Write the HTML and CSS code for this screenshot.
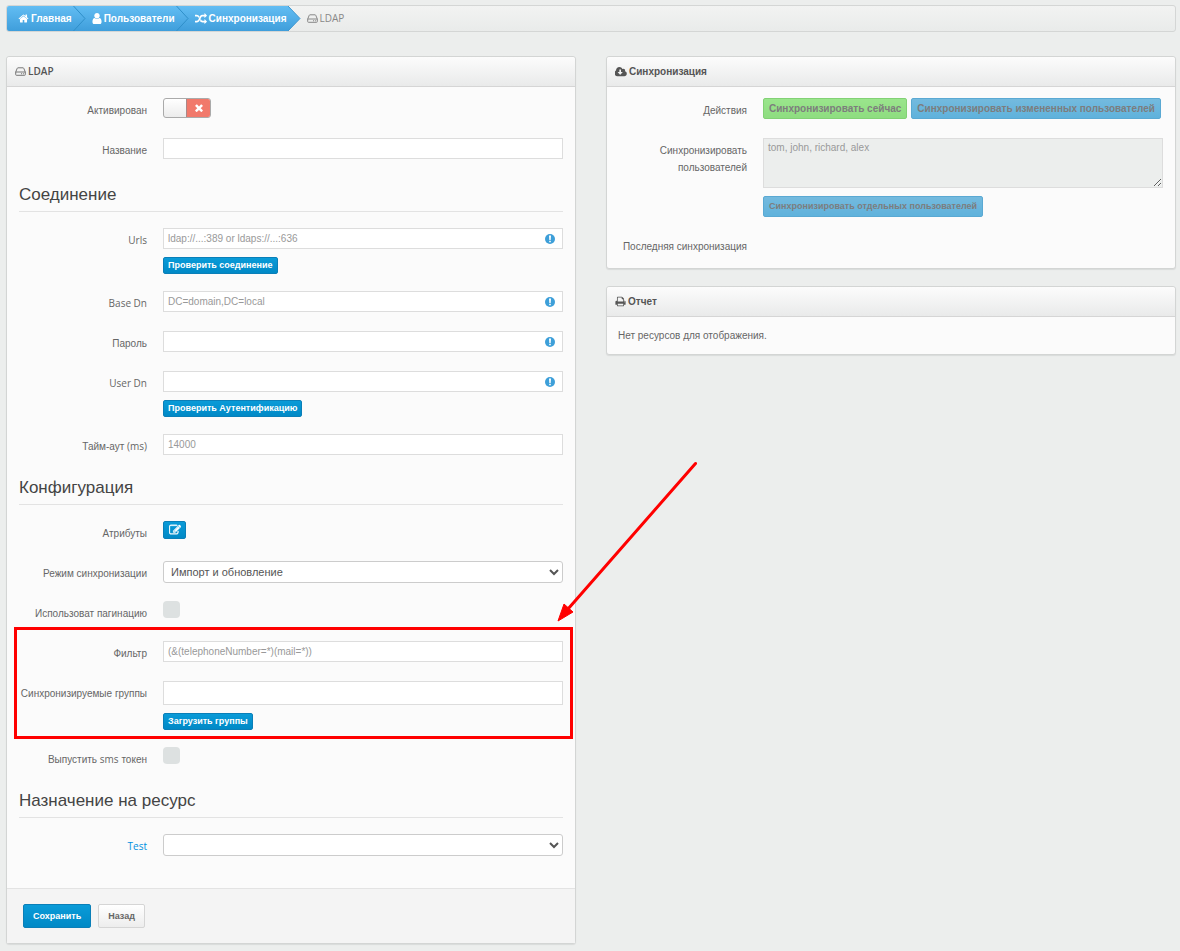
FILE: index.html
```html
<!DOCTYPE html>
<html lang="ru">
<head>
<meta charset="utf-8">
<meta name="viewport" content="width=device-width, initial-scale=1">
<title>LDAP</title>
<link rel="stylesheet" href="styles.css">
</head>
<body>
<svg class="sprite" aria-hidden="true">
  <symbol id="i-home" viewBox="0 0 1792 1792"><path d="M1472 992v480q0 26-19 45t-45 19h-384v-384h-256v384h-384q-26 0-45-19t-19-45v-480q0-1 .5-3t.5-3l575-474 575 474q1 2 1 6zm223-69l-62 74q-8 9-21 11h-3q-13 0-21-7l-692-577-692 577q-12 8-24 7-13-2-21-11l-62-74q-8-10-7-23.5t11-21.5l719-599q32-26 76-26t76 26l244 204v-195q0-14 9-23t23-9h192q14 0 23 9t9 23v408l219 182q10 8 11 21.5t-7 23.5z"/></symbol>
  <symbol id="i-user" viewBox="192 128 1408 1536"><path d="M1536 1399q0 109-62.5 187t-150.5 78h-854q-88 0-150.5-78t-62.5-187q0-85 8.5-160.5t31.5-152 58.5-131 94-89 134.5-34.5q131 128 313 128t313-128q76 0 134.5 34.5t94 89 58.5 131 31.5 152 8.5 160.5zm-256-887q0 159-112.5 271.5t-271.5 112.5-271.5-112.5-112.5-271.5 112.5-271.5 271.5-112.5 271.5 112.5 112.5 271.5z"/></symbol>
  <symbol id="i-random" viewBox="0 0 1792 1792"><path d="M666 481q-60 92-137 273-22-45-37-72.5t-40.5-63.5-51-56.5-63-35-81.5-14.5h-224q-14 0-23-9t-9-23v-192q0-14 9-23t23-9h224q250 0 410 225zm1126 799q0 14-9 23l-320 320q-9 9-23 9-13 0-22.5-9.5t-9.5-22.5v-192q-32 0-85 .5t-81 1-73-1-71-5-64-10.5-63-18.5-58-28.5-59-40-55-53.5-56-69.5q59-93 136-273 22 45 37 72.5t40.5 63.5 51 56.5 63 35 81.5 14.5h256v-192q0-14 9-23t23-9q12 0 24 10l319 319q9 9 9 23zm0-896q0 14-9 23l-320 320q-9 9-23 9-13 0-22.5-9.5t-9.5-22.5v-192h-256q-48 0-87 15t-69 45-51 61.5-45 77.5q-32 62-78 171-29 66-49.5 111t-54 105-64 100-74 83-90 68.5-106.5 42-128 16.5h-224q-14 0-23-9t-9-23v-192q0-14 9-23t23-9h224q48 0 87-15t69-45 51-61.5 45-77.5q32-62 78-171 29-66 49.5-111t54-105 64-100 74-83 90-68.5 106.5-42 128-16.5h256v-192q0-14 9-23t23-9q12 0 24 10l319 319q9 9 9 23z"/></symbol>
  <symbol id="i-hdd" viewBox="0 0 11 11"><path d="M.7 6 2.200 2.400q.2-.6.8-.6h5q.6 0 .8.6L10.300 6v2.600q0 .7-.7.7H1.400q-.7 0-.7-.7zM.7 6h9.600" fill="none" stroke="currentColor"/><path d="M6 7.200h1v1H6zM7.900 7.200h1v1h-1z"/></symbol>
  <symbol id="i-cloud" viewBox="0 0 1856 1792"><path d="M1216 928q0-14-9-23t-23-9h-224v-352q0-13-9.500-22.500t-22.500-9.500h-192q-13 0-22.500 9.500t-9.500 22.500v352h-224q-13 0-22.500 9.500t-9.500 22.500q0 14 9 23l352 352q9 9 23 9t23-9l351-351q10-12 10-24zm640 224q0 159-112.500 271.500t-271.500 112.500h-1088q-185 0-316.500-131.500t-131.500-316.500q0-130 70-240t188-165q-2-30-2-43 0-212 150-362t362-150q156 0 285.500 87t188.500 231q71-62 166-62 106 0 181 75t75 181q0 76-41 138 130 31 213.500 135.500t83.500 238.500z" transform="translate(-32 0)"/></symbol>
  <symbol id="i-print" viewBox="0 0 1792 1792"><path d="M448 1536h896v-256h-896v256zm0-640h896v-384h-160q-40 0-68-28t-28-68v-160h-640v640zm1152 64q0-26-19-45t-45-19-45 19-19 45 19 45 45 19 45-19 19-45zm128 0v416q0 13-9.500 22.500t-22.500 9.500h-224v160q0 40-28 68t-68 28h-960q-40 0-68-28t-28-68v-160h-224q-13 0-22.500-9.500t-9.500-22.500v-416q0-79 56.500-135.500t135.500-56.500h64v-544q0-40 28-68t68-28h672q40 0 88 20t76 48l152 152q28 28 48 76t20 88v256h64q79 0 135.500 56.500t56.500 135.500z"/></symbol>
  <symbol id="i-times" viewBox="302 302 1188 1252"><path d="M1490 1322q0 40-28 68l-136 136q-28 28-68 28t-68-28l-294-294-294 294q-28 28-68 28t-68-28l-136-136q-28-28-28-68t28-68l294-294-294-294q-28-28-28-68t28-68l136-136q28-28 68-28t68 28l294 294 294-294q28-28 68-28t68 28l136 136q28 28 28 68t-28 68l-294 294 294 294q28 28 28 68z"/></symbol>
  <symbol id="i-edit" viewBox="0 0 1792 1792"><path d="M888 1184l116-116-152-152-116 116v56h96v96h56zm440-720q-16-16-33 1l-350 350q-17 17-1 33t33-1l350-350q17-17 1-33zm80 594v190q0 119-84.500 203.500t-203.500 84.500h-832q-119 0-203.500-84.500t-84.500-203.500v-832q0-119 84.500-203.500t203.500-84.500h832q63 0 117 25 15 7 18 23 3 17-9 29l-49 49q-14 14-32 8-23-6-45-6h-832q-66 0-113 47t-47 113v832q0 66 47 113t113 47h832q66 0 113-47t47-113v-126q0-13 9-22l64-64q15-15 35-7t20 29zm-96-738l288 288-672 672h-288v-288zm444 132l-92 92-288-288 92-92q28-28 68-28t68 28l152 152q28 28 28 68t-28 68z" stroke="#fff" stroke-width="60"/></symbol>
  <symbol id="i-info" viewBox="0 0 10 10"><circle cx="5" cy="5" r="5"/><path d="M4 1.600h2L5.700 6H4.300zM4.200 6.800h1.600v1.500H4.200z" fill="#fff"/></symbol>
  <symbol id="i-sep" viewBox="0 0 13 25"><path d="M.5 0 12 12.500 .5 25" fill="none" stroke="#2f8fc9"/></symbol>
</svg>

<nav class="crumbs" aria-label="Навигация">
  <a class="crumb" href="#"><svg class="icon"><use href="#i-home"/></svg>Главная</a>
  <svg class="sep" aria-hidden="true"><use href="#i-sep"/></svg>
  <a class="crumb" href="#"><svg class="icon narrow"><use href="#i-user"/></svg>Пользователи</a>
  <svg class="sep" aria-hidden="true"><use href="#i-sep"/></svg>
  <a class="crumb" href="#"><svg class="icon wide"><use href="#i-random"/></svg>Синхронизация</a>
  <svg class="tip" viewBox="0 0 13 25" aria-hidden="true">
    <defs><linearGradient id="blue" x1="0" y1="0" x2="0" y2="1"><stop offset="0" stop-color="#62bdf3"/><stop offset="1" stop-color="#3f9edb"/></linearGradient></defs>
    <path d="M0 0 12 12.500 0 25z" fill="url(#blue)"/><path d="M0 0 12 12.500 0 25" fill="none" stroke="#3f97cf"/>
  </svg>
  <span class="here latin"><svg class="icon"><use href="#i-hdd"/></svg>LDAP</span>
</nav>

<main class="columns">
  <form class="panel">
    <h2 class="panel-head latin"><svg class="icon"><use href="#i-hdd"/></svg>LDAP</h2>
    <div class="panel-body">
      <div class="section first">
        <div class="row">
          <label for="active">Активирован</label>
          <div class="field">
            <span class="switch"><input type="checkbox" id="active"><span class="switch-off"><svg class="icon"><use href="#i-times"/></svg></span></span>
          </div>
        </div>
        <div class="row">
          <label for="name">Название</label>
          <div class="field"><input class="text" type="text" id="name"></div>
        </div>
      </div>

      <h3 class="title">Соединение</h3>
      <div class="section">
        <div class="row">
          <label class="latin" for="urls">Urls</label>
          <div class="field">
            <div class="hinted"><input class="text" type="text" id="urls" placeholder="ldap://...:389 or ldaps://...:636"><svg class="icon hint"><use href="#i-info"/></svg></div>
            <button class="btn small" type="button">Проверить соединение</button>
          </div>
        </div>
        <div class="row">
          <label class="latin" for="base">Base Dn</label>
          <div class="field"><div class="hinted"><input class="text" type="text" id="base" placeholder="DC=domain,DC=local"><svg class="icon hint"><use href="#i-info"/></svg></div></div>
        </div>
        <div class="row">
          <label for="pass">Пароль</label>
          <div class="field"><div class="hinted"><input class="text" type="password" id="pass"><svg class="icon hint"><use href="#i-info"/></svg></div></div>
        </div>
        <div class="row">
          <label class="latin" for="user">User Dn</label>
          <div class="field">
            <div class="hinted"><input class="text" type="text" id="user"><svg class="icon hint"><use href="#i-info"/></svg></div>
            <button class="btn small" type="button">Проверить Аутентификацию</button>
          </div>
        </div>
        <div class="row">
          <label for="timeout">Тайм-аут <span class="latin">(ms)</span></label>
          <div class="field"><input class="text" type="text" id="timeout" placeholder="14000"></div>
        </div>
      </div>

      <h3 class="title">Конфигурация</h3>
      <div class="section">
        <div class="row">
          <label for="attrs">Атрибуты</label>
          <div class="field"><button class="btn small square" type="button" id="attrs" aria-label="Атрибуты"><svg class="icon"><use href="#i-edit"/></svg></button></div>
        </div>
        <div class="row">
          <label for="mode">Режим синхронизации</label>
          <div class="field"><select id="mode"><option>Импорт и обновление</option></select></div>
        </div>
        <div class="row">
          <label for="paging">Использоват пагинацию</label>
          <div class="field"><input class="check" type="checkbox" id="paging"></div>
        </div>
        <div class="section marked">
          <div class="row">
            <label for="filter">Фильтр</label>
            <div class="field"><input class="text" type="text" id="filter" placeholder="(&amp;(telephoneNumber=*)(mail=*))"></div>
          </div>
          <div class="row">
            <label for="groups">Синхронизируемые группы</label>
            <div class="field">
              <input class="text tall" type="text" id="groups">
              <button class="btn small" type="button">Загрузить группы</button>
            </div>
          </div>
          <svg class="arrow" viewBox="0 0 150 170" aria-hidden="true"><path d="M142.500 6.500 15 152" stroke="#f00" stroke-width="3" stroke-linecap="round"/><path d="M5 164 11 147l9 8z" fill="#f00" stroke="#f00"/></svg>
        </div>
        <div class="row">
          <label for="sms">Выпустить <span class="latin">sms</span> токен</label>
          <div class="field"><input class="check" type="checkbox" id="sms"></div>
        </div>
      </div>

      <h3 class="title">Назначение на ресурс</h3>
      <div class="section">
        <div class="row">
          <div class="row-label"><a class="latin" href="#" id="test">Test</a></div>
          <div class="field"><select aria-labelledby="test"><option></option></select></div>
        </div>
      </div>
    </div>
    <div class="panel-foot">
      <button class="btn" type="submit">Сохранить</button>
      <button class="btn plain" type="button">Назад</button>
    </div>
  </form>

  <div class="side">
    <section class="panel">
      <h2 class="panel-head"><svg class="icon wide"><use href="#i-cloud"/></svg>Синхронизация</h2>
      <div class="panel-body">
        <div class="section">
          <div class="row">
            <div class="row-label">Действия</div>
            <div class="actions">
              <button class="btn medium green" type="button" disabled>Синхронизировать сейчас</button>
              <button class="btn medium" type="button" disabled>Синхронизировать измененных пользователей</button>
            </div>
          </div>
          <div class="row">
            <label for="users">Синхронизировать пользователей</label>
            <div class="field">
              <textarea id="users" disabled placeholder="tom, john, richard, alex"></textarea>
              <button class="btn medium fine" type="button" disabled>Синхронизировать отдельных пользователей</button>
            </div>
          </div>
          <div class="row"><div class="row-label">Последняя синхронизация</div></div>
        </div>
      </div>
    </section>
    <section class="panel">
      <h2 class="panel-head"><svg class="icon"><use href="#i-print"/></svg>Отчет</h2>
      <p class="empty">Нет ресурсов для отображения.</p>
    </section>
  </div>
</main>
</body>
</html>
```

FILE: styles.css
```css
* { box-sizing: border-box; }

body {
  margin: 0;
  padding: 5px 4px 8px 6px;
  background: #eceeed;
  color: #666;
  font: 10px/17px "Liberation Sans", Arial, sans-serif;
}

h2, h3, p { margin: 0; }
a { color: #0090e0; text-decoration: none; }
.latin { font-family: "Open Sans", "Liberation Sans", sans-serif; }
.sprite { position: absolute; width: 0; height: 0; }

.icon { width: 11px; height: 11px; fill: currentColor; flex: none; }
.icon.narrow { width: 10px; }
.icon.wide { width: 12px; height: 12px; }

/* Breadcrumbs */
.crumbs {
  display: flex;
  height: 27px;
  border: 1px solid #d4d6d5;
  border-radius: 3px;
  background: linear-gradient(#f2f3f2, #e9ebea);
  overflow: hidden;
}
.crumb, .here { display: flex; align-items: center; gap: 2px; }
.crumb {
  padding: 0 1px 0 6px;
  background: linear-gradient(#62bdf3, #3f9edb);
  color: #fff;
  font-weight: bold;
}
.crumb:first-child { padding-left: 11px; }
.sep, .tip { width: 13px; height: 100%; flex: none; }
.sep { background: linear-gradient(#62bdf3, #3f9edb); }
.here { padding-left: 6px; color: #888; }

/* Layout */
.columns {
  display: grid;
  grid-template-columns: minmax(0, 1fr) minmax(0, 1fr);
  gap: 30px;
  align-items: start;
  margin-top: 24px;
}
.side { display: grid; gap: 17px; }

.panel {
  border: 1px solid #d3d5d4;
  border-radius: 3px;
  background: #fbfbfb;
  box-shadow: 0 1px 1px #d9dbda;
}
.panel-head {
  display: flex;
  align-items: center;
  gap: 2px;
  height: 30px;
  padding: 0 8px;
  border-bottom: 1px solid #d5d5d5;
  background: linear-gradient(#fcfcfc, #e9eaea);
  border-radius: 3px 3px 0 0;
  color: #555;
  font-size: 10px;
}
.panel-head.latin { font-weight: 600; }
.panel-head.latin .icon { color: #777; }
.panel-body { padding: 11px 12px; }
form .panel-body { padding-bottom: 31px; }

.section { display: grid; gap: 17px; }
.section.first { padding-bottom: 3px; }
.row {
  display: grid;
  grid-template-columns: 128px minmax(0, 1fr);
  gap: 16px;
  min-height: 23px;
}
.row > label, .row-label { padding-top: 4px; text-align: right; white-space: normal; }
.field { display: flex; flex-direction: column; align-items: flex-start; gap: 8px; }

.title {
  display: flex;
  align-items: flex-end;
  height: 48px;
  margin-bottom: 16px;
  padding-bottom: 4px;
  border-bottom: 1px solid #e3e3e3;
  color: #444;
  font-size: 17px;
  font-weight: normal;
  line-height: 24px;
}

/* Controls */
.text, select, textarea {
  display: block;
  width: 100%;
  margin: 0;
  border: 1px solid #ddd;
  background: #fff;
  color: #555;
  font: 10px/17px "Liberation Sans", Arial, sans-serif;
}
.text { height: 21px; padding: 0 4px; }
.text.tall { height: 24px; }
::placeholder { color: #999; opacity: 1; }
select {
  height: 22px;
  padding: 0 3px;
  border-color: #ccc;
  border-radius: 3px;
  font-size: 11px;
}
textarea {
  height: 50px;
  padding: 0 4px;
  background: #eceeed;
  resize: vertical;
}
.hinted { position: relative; width: 100%; }
.hint { position: absolute; right: 8px; top: 6px; width: 10px; height: 10px; fill: #3d9fd9; }

.check {
  appearance: none;
  width: 17px;
  height: 17px;
  margin: 0;
  border-radius: 4px;
  background: #dde1e1;
}

.switch {
  display: flex;
  width: 48px;
  height: 20px;
  border: 1px solid #aaa;
  border-radius: 3px;
  background: linear-gradient(#fff, #ececec);
  overflow: hidden;
  position: relative;
}
.switch input { position: absolute; inset: 0; width: 100%; height: 100%; margin: 0; opacity: 0; }
.switch-off {
  display: flex;
  align-items: center;
  justify-content: center;
  width: 24px;
  margin-left: auto;
  border-left: 1px solid #a88;
  background: #f1796b;
  color: #fff;
}
.switch .icon { width: 8px; height: 8px; }

.btn {
  height: 24px;
  margin: 0;
  padding: 0 9px;
  border: 1px solid #0a7fb8;
  border-radius: 2px;
  background: linear-gradient(#0a9bd8, #0089c6);
  color: #fff;
  font: bold 9px/15px "Liberation Sans", Arial, sans-serif;
  white-space: nowrap;
}
.btn.small { height: 17px; padding: 0 4px; }
.btn.square { display: grid; place-items: center; width: 23px; height: 18px; }
.btn.square .icon { width: 12px; height: 12px; }
.btn.medium {
  height: 21px;
  padding: 0 5px;
  border-color: #5aa9d3;
  background: linear-gradient(#74bade, #5fb2dc);
  color: #7d7d7d;
  font-size: 10px;
}
.btn.medium.green { border-color: #82d175; background: linear-gradient(#9ae58c, #8edd80); }
.btn.medium.fine { font-size: 9px; }
.btn.plain { border-color: #d5d5d5; background: linear-gradient(#fff, #ededed); color: #666; }
.actions { display: flex; flex-wrap: wrap; align-items: flex-start; gap: 4px; }

.panel-foot {
  display: flex;
  gap: 7px;
  padding: 15px 16px;
  border-top: 1px solid #e3e3e3;
  background: #f4f4f4;
}
.empty { padding: 10px 11px; }

/* Highlight frame and pointer over the filter rows */
.marked { position: relative; }
.marked::after {
  content: "";
  position: absolute;
  inset: -14px -10px -9px -5px;
  border: 3px solid #f00;
  pointer-events: none;
}
.arrow {
  position: absolute;
  z-index: 1;
  right: -140px;
  top: -184px;
  width: 150px;
  height: 170px;
  pointer-events: none;
}
```
